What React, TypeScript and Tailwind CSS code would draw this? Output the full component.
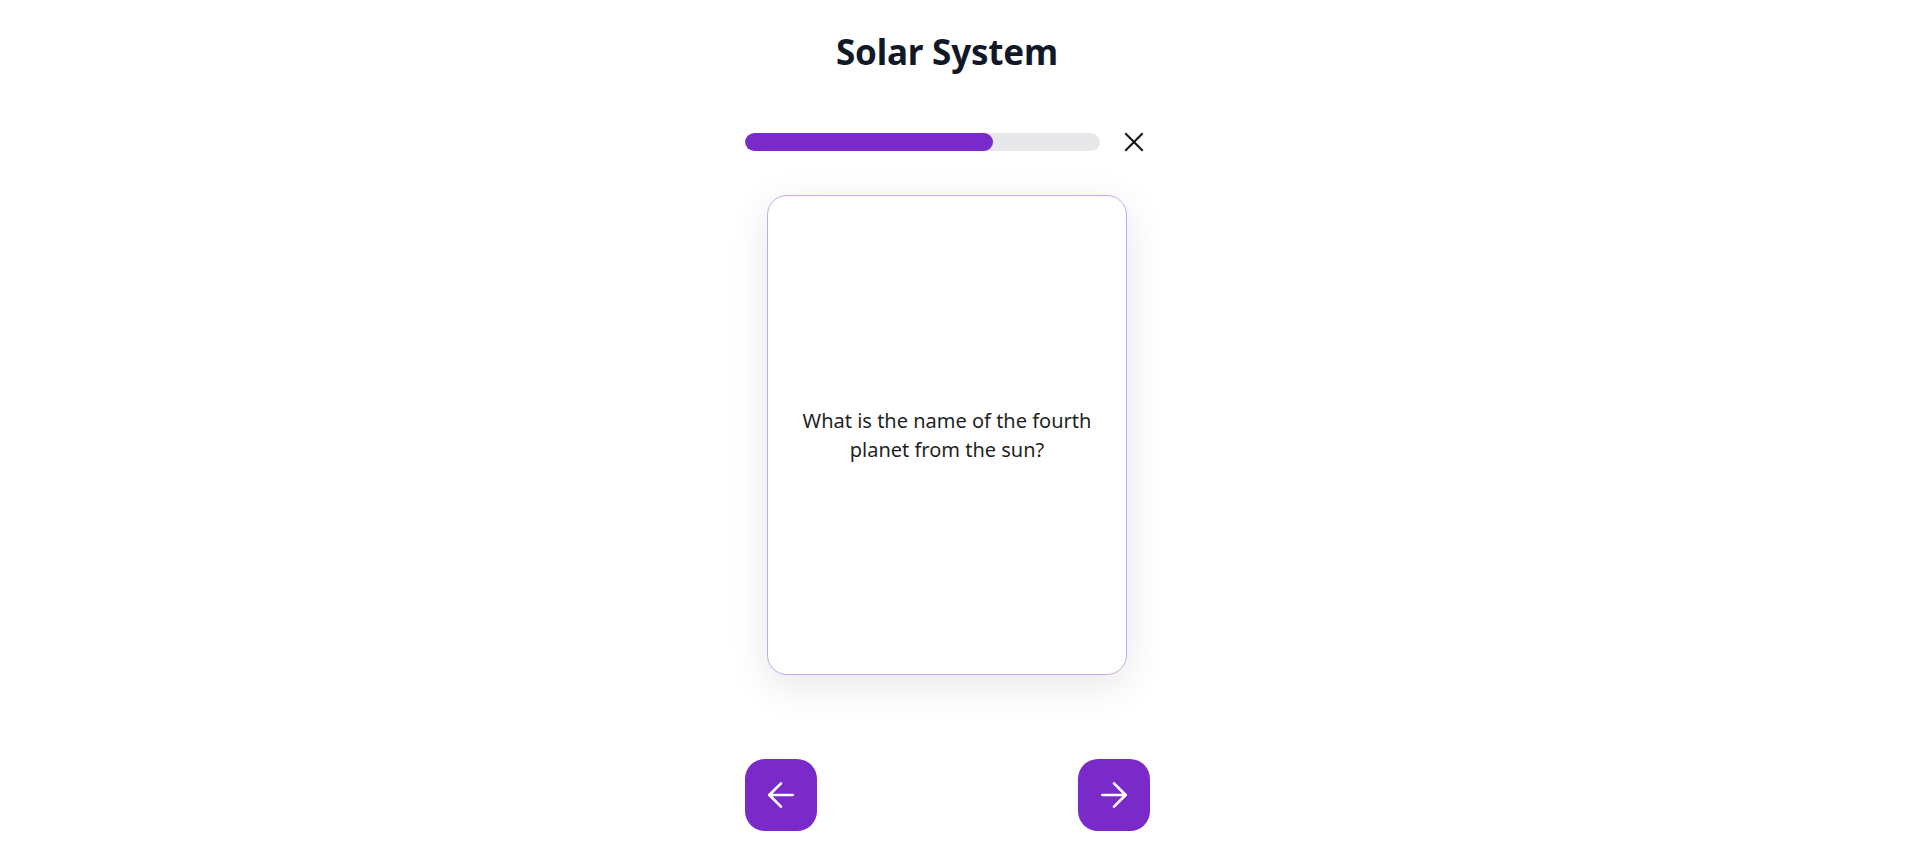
import { useState } from 'react'

const cards = [
  { q: 'What is the name of the fourth planet from the sun?', a: 'Mars' },
]

function ArrowIcon({ dir }: { dir: 'left' | 'right' }) {
  return (
    <svg
      width="40"
      height="40"
      viewBox="0 0 24 24"
      fill="none"
      stroke="currentColor"
      strokeWidth="1.6"
      strokeLinecap="round"
      strokeLinejoin="round"
      className={dir === 'right' ? 'rotate-180' : ''}
    >
      <path d="M19 12H5" />
      <path d="M12 19l-7-7 7-7" />
    </svg>
  )
}

export default function App() {
  const [idx] = useState(0)
  const progress = 70
  const card = cards[idx]

  return (
    <div className="min-h-[1320px] bg-white pr-[20px] font-['Noto_Sans',sans-serif] text-gray-900">
      <div className="flex flex-col items-center pt-8">
        {/* ── タイトル ── */}
        <h1 className="text-[35px] leading-10 font-bold tracking-[-0.2px] text-[#111827]">Solar System</h1>

        {/* ── 進捗バー ── */}
        <div className="mt-[58px] flex w-[405px] items-center gap-[22px] pr-1">
          <div className="h-4.5 flex-1 overflow-hidden rounded-full bg-[#e8e8ea]">
            <div className="h-full rounded-full bg-[#7a2ac9]" style={{ width: `${progress}%` }} />
          </div>
          <button className="text-[#111]" aria-label="close">
            <svg width="24" height="24" viewBox="0 0 24 24" fill="none" stroke="currentColor" strokeWidth="2" strokeLinecap="square">
              <path d="M4 4l16 16" />
              <path d="M20 4L4 20" />
            </svg>
          </button>
        </div>

        {/* ── カード ── */}
        <div className="mt-[41px] flex h-[480px] w-[360px] items-center justify-center rounded-[20px] border border-[#c8a8ec] bg-white px-6 shadow-[0_10px_40px_rgba(0,0,0,0.10)]">
          <p className="text-center text-[20px] leading-[29px] text-[#1f1f24]">{card.q}</p>
        </div>

        {/* ── ナビゲーション ── */}
        <div className="mt-[84px] flex w-[405px] justify-between">
          <button className="flex h-[72px] w-[72px] items-center justify-center rounded-[20px] bg-[#7a2ac9] text-white" aria-label="previous">
            <ArrowIcon dir="left" />
          </button>
          <button className="flex h-[72px] w-[72px] items-center justify-center rounded-[20px] bg-[#7a2ac9] text-white" aria-label="next">
            <ArrowIcon dir="right" />
          </button>
        </div>
      </div>
    </div>
  )
}
